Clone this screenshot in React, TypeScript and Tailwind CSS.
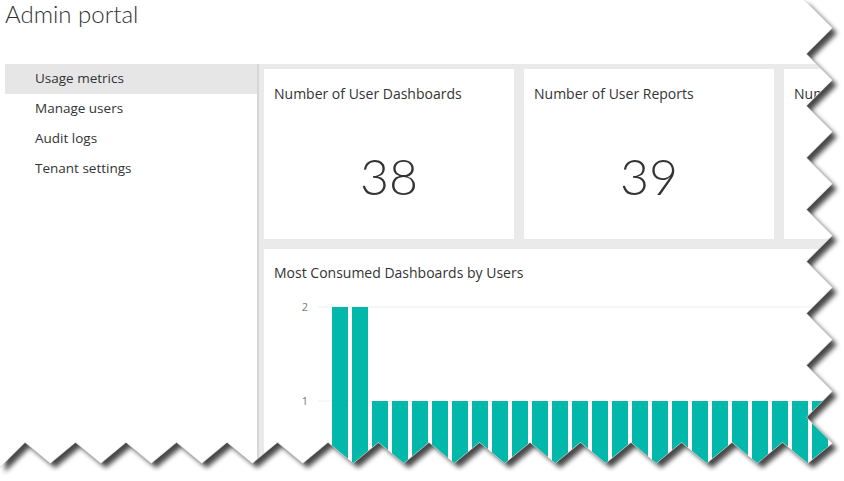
import React from "react";

//* data *//
const navItems = ["Usage metrics", "Manage users", "Audit logs", "Tenant settings"];

const tiles = [
  { title: "Number of User Dashboards", value: "38" },
  { title: "Number of User Reports", value: "39" },
  { title: "Number of Datasets", value: "41" },
];

const barValues = [2, 2, ...Array.from({ length: 26 }, () => 1)];

//* torn paper edge points *//
const buildEdge = () => {
  const pts: [number, number][] = [[0, 0], [804, 0]];
  for (let k = 0; k < 9; k++) {
    const vy = 2 + 51.9 * k;
    pts.push([806, vy]);
    pts.push([832, vy + 26]);
  }
  for (let k = 15; k >= 0; k--) {
    pts.push([50.25 + 50.5 * k, 463]);
    pts.push([25 + 50.5 * k, 442]);
  }
  pts.push([0, 467]);
  return pts.map(([x, y]) => `${x},${y}`).join(" ");
};

const edge = buildEdge();

const Tile: React.FC<{ title: string; value: string }> = ({ title, value }) => (
  <div className="flex h-[170px] w-[250px] shrink-0 flex-col overflow-hidden bg-white">
    <div className="px-[10px] pt-[15px] text-[14px] leading-[20px] whitespace-nowrap text-[#333]">
      {title}
    </div>
    <div className="mt-[47px] text-center font-['Lato',sans-serif] text-[50px] leading-none font-light text-[#333]">
      {value}
    </div>
  </div>
);

const Chart = () => (
  <svg width="600" height="220" className="block">
    <text x="41" y="28" textAnchor="middle" fontSize="11" fill="#777">
      2
    </text>
    <text x="41" y="122" textAnchor="middle" fontSize="11" fill="#777">
      1
    </text>
    <line x1="54" y1="24" x2="600" y2="24" stroke="#eeeeee" />
    <line x1="54" y1="118" x2="600" y2="118" stroke="#eeeeee" />
    {barValues.map((v, i) => (
      <rect
        key={i}
        x={68 + i * 20}
        y={v === 2 ? 24 : 118}
        width="16"
        height={v === 2 ? 196 : 102}
        fill="#01b8aa"
      />
    ))}
  </svg>
);

export default function App() {
  return (
    <div className="relative h-[481px] w-[844px] overflow-hidden bg-white font-['Open_Sans',sans-serif] text-[#333]">
      <h1 className="h-[64px] pl-[5px] font-['Lato',sans-serif] text-[24px] leading-[28px] font-light text-[#333]">
        Admin portal
      </h1>
      <div className="flex h-[417px]">
        <nav className="ml-[5px] flex w-[252px] shrink-0 flex-col">
          {navItems.map((item, i) => (
            <div
              key={item}
              className={`flex h-[30px] items-center pb-[2px] pl-[30px] text-[13.5px] ${
                i === 0 ? "bg-[#e6e6e6]" : ""
              }`}
            >
              {item}
            </div>
          ))}
        </nav>
        <div className="w-[2px] shrink-0 bg-[#d6d6d6]" />
        <main className="flex min-w-0 flex-1 flex-col gap-[10px] overflow-hidden bg-[#eaeaea] pt-[5px] pl-[5px]">
          <div className="flex gap-[10px]">
            {tiles.map((t) => (
              <Tile key={t.title} title={t.title} value={t.value} />
            ))}
          </div>
          <div className="flex w-[600px] flex-1 flex-col bg-white">
            <div className="px-[10px] pt-[14px] text-[14px] leading-[20px] whitespace-nowrap">
              Most Consumed Dashboards by Users
            </div>
            <Chart />
          </div>
        </main>
      </div>

      {/* torn edge overlay */}
      <svg
        width="844"
        height="481"
        className="pointer-events-none absolute inset-0"
      >
        <defs>
          <mask id="outside">
            <rect width="844" height="481" fill="white" />
            <polygon points={edge} fill="black" />
          </mask>
          <filter id="soft" x="-5%" y="-5%" width="110%" height="110%">
            <feGaussianBlur stdDeviation="2.5" />
          </filter>
        </defs>
        <g mask="url(#outside)">
          <rect width="844" height="481" fill="white" />
          <polygon
            points={edge}
            transform="translate(5,5)"
            fill="#000"
            opacity="0.72"
            filter="url(#soft)"
          />
          <polygon points={edge} fill="none" stroke="#cfcfcf" strokeWidth="1.2" />
        </g>
      </svg>
    </div>
  );
}
